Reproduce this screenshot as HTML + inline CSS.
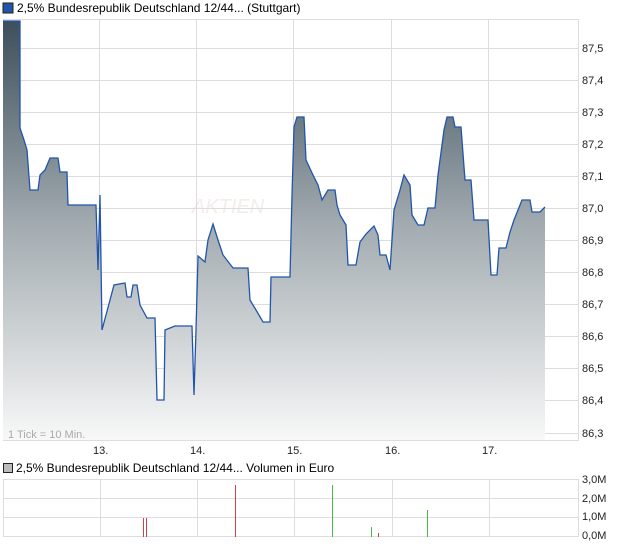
<!DOCTYPE html>
<html><head><meta charset="utf-8"><style>
body{margin:0;background:#fff;width:620px;height:546px;overflow:hidden;font-family:"Liberation Sans",sans-serif;}
svg text{font-family:"Liberation Sans",sans-serif;}
</style></head><body>
<svg width="620" height="546" xmlns="http://www.w3.org/2000/svg">
<defs>
<linearGradient id="g" gradientUnits="userSpaceOnUse" x1="0" y1="20" x2="0" y2="440">
<stop offset="0" stop-color="#3c4f5b"/><stop offset="0.5" stop-color="#a4adb2"/><stop offset="1" stop-color="#f8f8f8"/>
</linearGradient>
</defs>
<rect x="3" y="3" width="10" height="10" fill="#2255aa" stroke="#222" stroke-width="1"/>
<text x="17" y="12" font-size="12" fill="#000">2,5% Bundesrepublik Deutschland 12/44... (Stuttgart)</text>
<g stroke="#dddddd" stroke-width="1" fill="none">
<rect x="3.5" y="19.5" width="575" height="421"/>
<line x1="3" y1="48.5" x2="578" y2="48.5"/><line x1="3" y1="80.5" x2="578" y2="80.5"/><line x1="3" y1="112.5" x2="578" y2="112.5"/><line x1="3" y1="144.5" x2="578" y2="144.5"/><line x1="3" y1="176.5" x2="578" y2="176.5"/><line x1="3" y1="208.5" x2="578" y2="208.5"/><line x1="3" y1="240.5" x2="578" y2="240.5"/><line x1="3" y1="272.5" x2="578" y2="272.5"/><line x1="3" y1="304.5" x2="578" y2="304.5"/><line x1="3" y1="336.5" x2="578" y2="336.5"/><line x1="3" y1="368.5" x2="578" y2="368.5"/><line x1="3" y1="400.5" x2="578" y2="400.5"/><line x1="3" y1="433.5" x2="578" y2="433.5"/>
<line x1="99.5" y1="19" x2="99.5" y2="441"/><line x1="196.5" y1="19" x2="196.5" y2="441"/><line x1="293.5" y1="19" x2="293.5" y2="441"/><line x1="391.5" y1="19" x2="391.5" y2="441"/><line x1="488.5" y1="19" x2="488.5" y2="441"/>
</g>
<path d="M3,440 L3,21 L20,21 L20,128 L24,140 L27,150 L30,190 L38,190 L40,175 L45,170 L50,158 L58,158 L60,172 L67,172 L68,205 L96,205 L98,270 L100,195 L102,330 L106,315 L110,300 L114,285 L125,283 L127,297 L131,297 L133,285 L137,285 L140,305 L147,318 L155,318 L157,400 L164,400 L165,330 L175,326 L192,326 L194,395 L196,330 L198,256 L205,262 L208,240 L213,224 L218,240 L223,255 L233,268 L248,268 L250,300 L256,310 L263,322 L270,322 L271,277 L290,277 L292,195 L294,127 L297,117 L304,117 L306,160 L313,175 L318,185 L322,200 L328,190 L335,190 L337,205 L340,215 L346,225 L348,265 L356,265 L360,242 L366,234 L374,226 L378,235 L380,255 L386,255 L390,270 L394,210 L400,190 L404,175 L410,185 L412,215 L418,225 L424,225 L428,208 L435,208 L438,175 L444,130 L447,117 L453,117 L455,127 L461,127 L465,180 L471,180 L474,220 L488,220 L491,275 L497,275 L499,248 L506,248 L510,232 L514,220 L518,210 L522,200 L530,200 L532,212 L540,212 L545,207 L545,440 Z" fill="url(#g)"/>
<text x="192" y="213" font-size="20" fill="#e6dcd8" fill-opacity="0.5" font-style="italic">AKTIEN</text>
<path d="M3,21 L20,21 L20,128 L24,140 L27,150 L30,190 L38,190 L40,175 L45,170 L50,158 L58,158 L60,172 L67,172 L68,205 L96,205 L98,270 L100,195 L102,330 L106,315 L110,300 L114,285 L125,283 L127,297 L131,297 L133,285 L137,285 L140,305 L147,318 L155,318 L157,400 L164,400 L165,330 L175,326 L192,326 L194,395 L196,330 L198,256 L205,262 L208,240 L213,224 L218,240 L223,255 L233,268 L248,268 L250,300 L256,310 L263,322 L270,322 L271,277 L290,277 L292,195 L294,127 L297,117 L304,117 L306,160 L313,175 L318,185 L322,200 L328,190 L335,190 L337,205 L340,215 L346,225 L348,265 L356,265 L360,242 L366,234 L374,226 L378,235 L380,255 L386,255 L390,270 L394,210 L400,190 L404,175 L410,185 L412,215 L418,225 L424,225 L428,208 L435,208 L438,175 L444,130 L447,117 L453,117 L455,127 L461,127 L465,180 L471,180 L474,220 L488,220 L491,275 L497,275 L499,248 L506,248 L510,232 L514,220 L518,210 L522,200 L530,200 L532,212 L540,212 L545,207" fill="none" stroke="#2255aa" stroke-width="1.3"/>
<text x="8" y="438" font-size="11" fill="#aaaaaa">1 Tick = 10 Min.</text>
<g font-size="11" fill="#222">
<text x="582" y="52">87,5</text><text x="582" y="84">87,4</text><text x="582" y="116">87,3</text><text x="582" y="148">87,2</text><text x="582" y="180">87,1</text><text x="582" y="212">87,0</text><text x="582" y="244">86,9</text><text x="582" y="276">86,8</text><text x="582" y="308">86,7</text><text x="582" y="340">86,6</text><text x="582" y="372">86,5</text><text x="582" y="404">86,4</text><text x="582" y="437">86,3</text>
<text x="93" y="454">13.</text><text x="190" y="454">14.</text><text x="287" y="454">15.</text><text x="385" y="454">16.</text><text x="482" y="454">17.</text>
<text x="582" y="483">3,0M</text><text x="582" y="502">2,0M</text><text x="582" y="520">1,0M</text><text x="582" y="539">0,0M</text>
</g>
<rect x="3.5" y="463.5" width="9" height="9" fill="#bbbbbb" stroke="#222" stroke-width="1"/>
<text x="16" y="472" font-size="12" fill="#000">2,5% Bundesrepublik Deutschland 12/44... Volumen in Euro</text>
<g stroke="#dddddd" stroke-width="1" fill="none">
<rect x="3.5" y="479.5" width="575" height="57"/>
<line x1="3" y1="498.5" x2="578" y2="498.5"/><line x1="3" y1="517.5" x2="578" y2="517.5"/>
<line x1="100.5" y1="479" x2="100.5" y2="537"/><line x1="197.5" y1="479" x2="197.5" y2="537"/><line x1="294.5" y1="479" x2="294.5" y2="537"/><line x1="392.5" y1="479" x2="392.5" y2="537"/><line x1="489.5" y1="479" x2="489.5" y2="537"/>
</g>
<g stroke-width="1">
<line x1="143.5" y1="518" x2="143.5" y2="537" stroke="#cc4444"/><line x1="146.5" y1="518" x2="146.5" y2="537" stroke="#cc4444"/>
<line x1="235.5" y1="485" x2="235.5" y2="537" stroke="#cc4444"/>
<line x1="332.5" y1="485" x2="332.5" y2="537" stroke="#44bb44"/>
<line x1="371.5" y1="527" x2="371.5" y2="537" stroke="#44bb44"/>
<line x1="378.5" y1="533" x2="378.5" y2="537" stroke="#cc4444"/>
<line x1="427.5" y1="510" x2="427.5" y2="537" stroke="#44bb44"/>
</g>
</svg>
</body></html>
